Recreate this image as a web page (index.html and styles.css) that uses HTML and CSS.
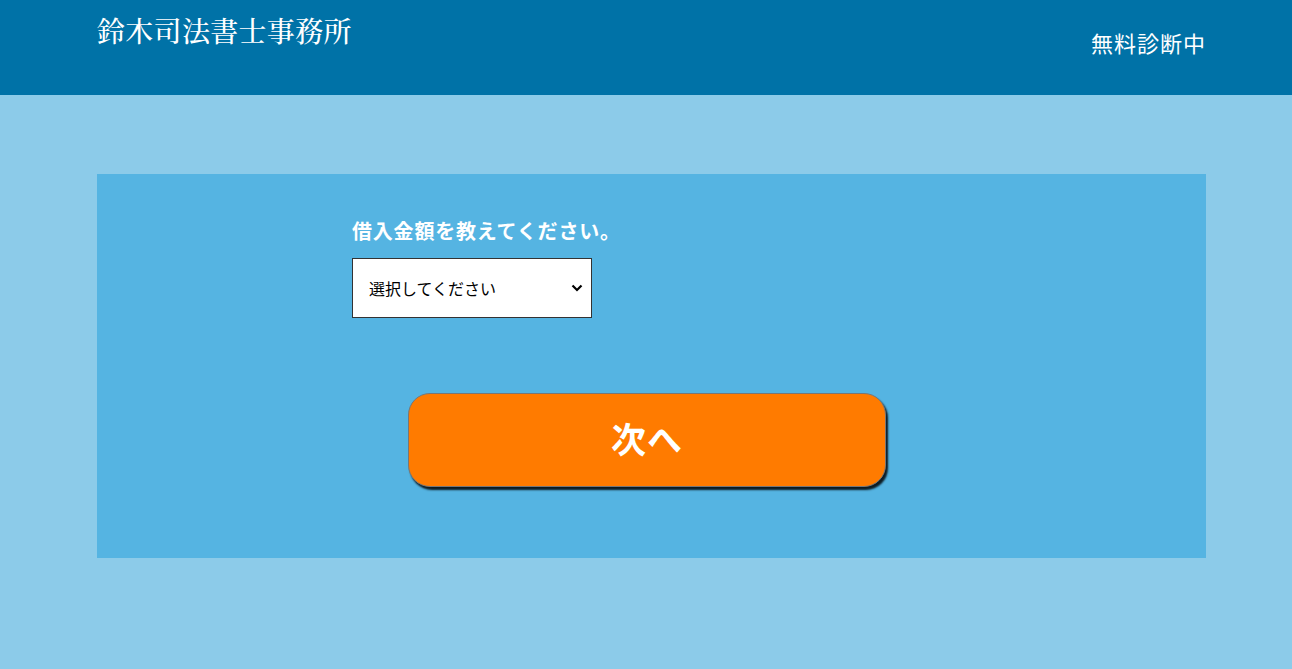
FILE: index.html
```html
<!DOCTYPE html>
<html lang="ja">
<head>
    <meta charset="UTF-8">
    <meta name="viewport" content="width=device-width, initial-scale=1.0">
    <title>鈴木司法書士事務所 - 無料診断</title>
    <link rel="stylesheet" href="styles.css">
</head>
<body>
    <!-- ヘッダー -->
    <header class="header">
        <div class="header-inner">
            <div class="logo">鈴木司法書士事務所</div>
            <div class="header-note">無料診断中</div>
        </div>
    </header>

    <!-- 診断フォーム -->
    <main class="main">
        <section class="card">
            <form class="step-form" id="stepForm">
                <label class="question" for="loanAmount">借入金額を教えてください。</label>
                <div class="select-wrap">
                    <select id="loanAmount" class="select">
                        <option value="">選択してください</option>
                        <option>100万円未満</option>
                        <option>100〜300万円</option>
                        <option>300〜500万円</option>
                        <option>500万円以上</option>
                    </select>
                    <svg class="chevron" width="12" height="8" viewBox="0 0 12 8">
                        <path d="M1.5 1.5 L6 6 L10.5 1.5" fill="none" stroke="#000" stroke-width="2.2"/>
                    </svg>
                </div>
                <button type="submit" class="next-btn">次へ</button>
            </form>
        </section>
    </main>
</body>
</html>
```

FILE: styles.css
```css
/* 全体 */
body {
    margin: 0;
    padding: 0;
    background-color: #8ccbe9;
    font-family: "Noto Sans CJK JP", "Noto Sans", sans-serif;
    min-height: 669px;
}

/* ヘッダー */
.header {
    background-color: #0072a7;
    height: 95px;
}

.header-inner {
    display: flex;
    justify-content: space-between;
    margin: 0 86px 0 97px;
    height: 95px;
}

.logo {
    color: #fff;
    font-family: "Noto Serif CJK JP", "Liberation Serif", "Noto Sans CJK JP", serif;
    font-size: 28px;
    font-weight: 500;
    letter-spacing: 0.3px;
    line-height: 1;
    padding-top: 16px;
}

.header-note {
    color: #fff;
    font-size: 22px;
    line-height: 1;
    padding-top: 31px;
    letter-spacing: 1px;
}

/* メイン */
.main {
    margin: 0 86px 0 97px;
    padding-top: 79px;
}

.card {
    background-color: #55b4e2;
    height: 384px;
    padding-left: 255px;
    box-sizing: border-box;
    padding-top: 43px;
}

.step-form {
    width: 590px;
    display: flex;
    flex-direction: column;
}

.question {
    color: #fff;
    font-size: 20px;
    font-weight: bold;
    line-height: 28px;
    letter-spacing: 0.8px;
    margin-bottom: 13px;
}

.select-wrap {
    position: relative;
    width: 240px;
    height: 60px;
}

.select {
    appearance: none;
    -webkit-appearance: none;
    width: 240px;
    height: 60px;
    border: 1px solid #333;
    border-radius: 0;
    background-color: #fff;
    padding: 0 30px 0 16px;
    font-family: "Noto Sans CJK JP", sans-serif;
    font-size: 16px;
    color: #000;
    margin: 0;
}

.chevron {
    position: absolute;
    right: 9px;
    top: 26px;
    pointer-events: none;
}

.next-btn {
    align-self: center;
    margin-top: 75px;
    width: 478px;
    height: 94px;
    padding: 0 0 6px;
    background-color: #ff7b00;
    color: #fff;
    border: 1px solid #777;
    border-radius: 22px;
    box-shadow: 2px 3px 2px rgba(0, 0, 0, 0.85);
    font-family: "Noto Sans CJK JP", sans-serif;
    font-size: 35px;
    font-weight: bold;
    cursor: pointer;
    letter-spacing: 1px;
}

.next-btn:hover {
    background-color: #f07000;
}
```
